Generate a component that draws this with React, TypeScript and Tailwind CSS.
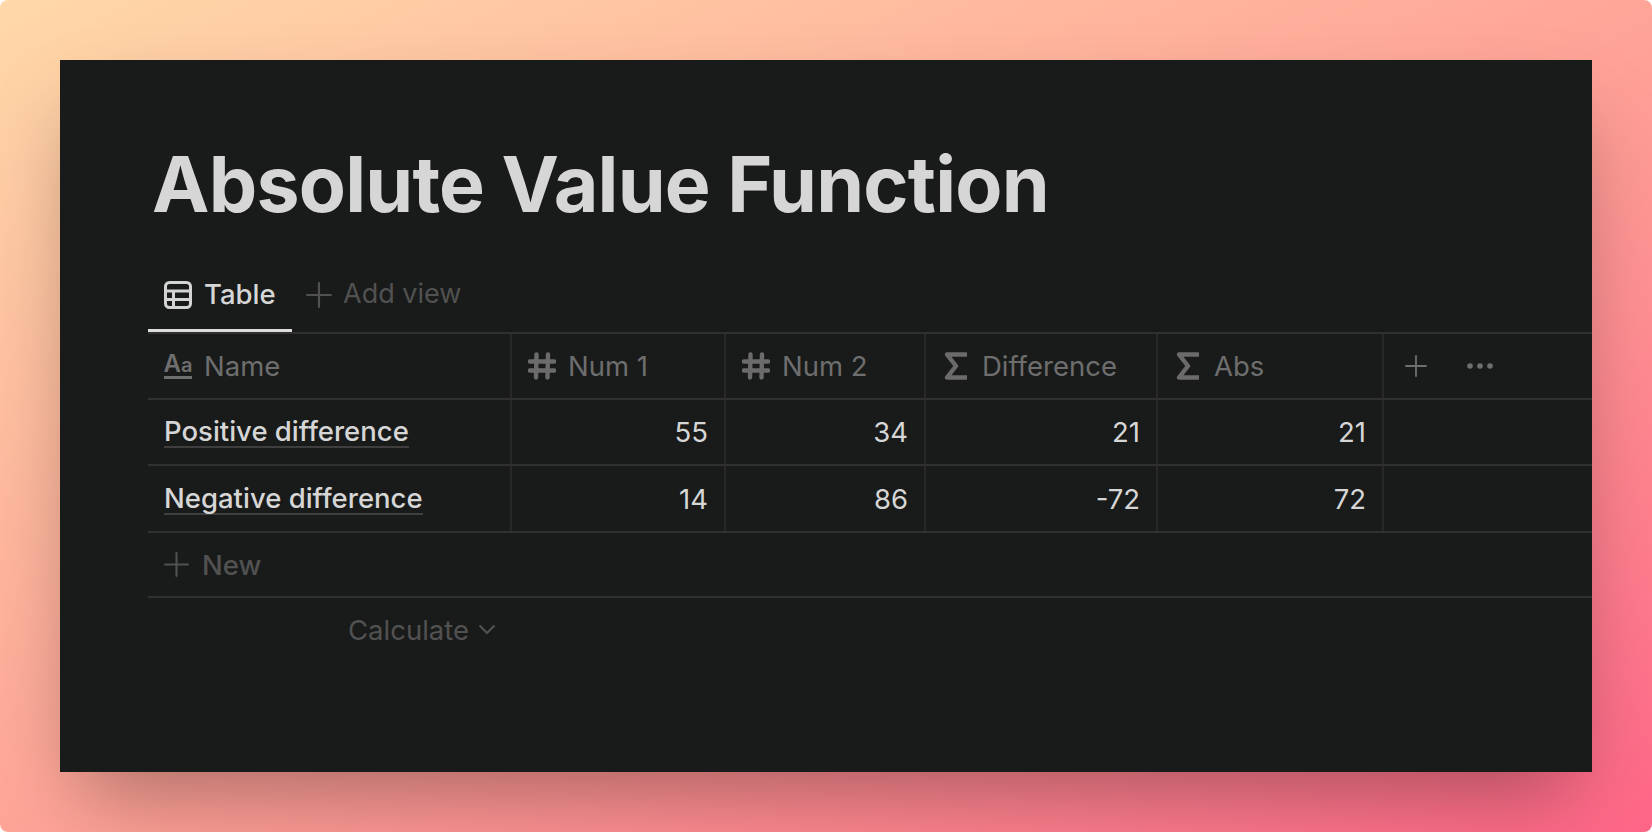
import type { ReactNode } from "react";

const cols = "grid grid-cols-[364px_214px_200px_232px_226px_1fr]";

function TableIcon() {
  return (
    <svg width="28" height="28" viewBox="0 0 28 28" fill="none" stroke="#d4d4d4" strokeWidth="3">
      <rect x="1.5" y="1.5" width="25" height="25" rx="4" />
      <path d="M1.5 10h25M1.5 18.5h25M9.5 10v16.5" />
    </svg>
  );
}

function HashIcon() {
  return (
    <svg width="28" height="28" viewBox="0 0 28 28" fill="none" stroke="#6b6b6b" strokeWidth="4.4" strokeLinecap="round">
      <path d="M8.5 2.5l-.5 23M20 2.5l-.5 23M2 9.5h24M2 18.5h24" />
    </svg>
  );
}

function SigmaIcon() {
  return (
    <svg width="24" height="28" viewBox="0 0 24 28" fill="none" stroke="#6b6b6b" strokeWidth="4.4" strokeLinejoin="round">
      <path d="M23 2.5H3L12 14 3 25.5h20" />
    </svg>
  );
}

function PlusIcon({ size, color }: { size: number; color: string }) {
  return (
    <svg width={size} height={size} viewBox="0 0 24 24" fill="none" stroke={color} strokeWidth="2" strokeLinecap="round">
      <path d="M12 1v22M1 12h22" />
    </svg>
  );
}

function HeaderCell({ icon, label }: { icon: ReactNode; label: string }) {
  return (
    <div className="flex items-center border-r-2 border-[#272827] pl-[16px] text-[#6e6e6e]">
      <span className="mr-[12px] flex w-[28px] shrink-0 justify-center">{icon}</span>
      <span className="pt-[2px]">{label}</span>
    </div>
  );
}

function DataRow({ name, values }: { name: string; values: number[] }) {
  return (
    <div className={`${cols} h-[66.5px] border-b-2 border-[#2f302f] text-[#d6d6d6]`}>
      <div className="flex items-center border-r-2 border-[#272827] pl-[16px]">
        <span className="border-b-2 border-[#3d3e3d] pt-[2px] font-medium leading-[29px]">{name}</span>
      </div>
      {values.map((v, i) => (
        <div key={i} className="flex items-center justify-end border-r-2 border-[#272827] pr-[16px] pt-[2px]">
          {v}
        </div>
      ))}
      <div />
    </div>
  );
}

export default function App() {
  return (
    <div className="h-screen bg-white font-['Inter',sans-serif]">
      <div className="h-full overflow-hidden rounded-lg bg-gradient-to-br from-[#ffd8a8] via-[#ffa598] to-[#ff6688] p-[60px]">
        <div className="h-[712px] overflow-hidden bg-[#191b1a] pl-[88px] text-[27.5px] shadow-[0_40px_80px_-20px_rgba(0,0,0,0.34)]">
          <h1 className="pl-[4px] pt-[77px] text-[77px] font-bold leading-[94px] tracking-[-0.8px] text-[#d6d6d6]">
            Absolute Value Function
          </h1>

          {/* Tabs */}
          <div className="mt-[31px] flex h-[70px] items-stretch">
            <div className="flex w-[144px] items-center gap-[12px] border-b-[3px] border-[#dcdcdc] pb-[2px] pl-[16px] font-medium text-[#d6d6d6]">
              <TableIcon />
              Table
            </div>
            <div className="ml-[14px] flex items-center gap-[11px] pb-[5px] text-[27px] text-[#515151]">
              <PlusIcon size={26} color="#515151" />
              Add view
            </div>
          </div>

          {/* Table */}
          <div className="border-t-2 border-[#2f302f]">
            <div className={`${cols} h-[65.5px] border-b-2 border-[#2f302f]`}>
              <div className="flex items-center border-r-2 border-[#272827] pl-[16px] text-[#6e6e6e]">
                <span className="mr-[12px] flex w-[28px] items-baseline justify-center border-b-[3px] border-[#6e6e6e] font-semibold leading-[22px]">
                  <span className="text-[24px]">A</span>
                  <span className="text-[20px]">a</span>
                </span>
                <span className="pt-[2px]">Name</span>
              </div>
              <HeaderCell icon={<HashIcon />} label="Num 1" />
              <HeaderCell icon={<HashIcon />} label="Num 2" />
              <HeaderCell icon={<SigmaIcon />} label="Difference" />
              <HeaderCell icon={<SigmaIcon />} label="Abs" />
              <div className="flex items-center pl-[21px]">
                <PlusIcon size={22} color="#6e6e6e" />
                <svg className="ml-[40px]" width="26" height="6" viewBox="0 0 26 6" fill="#6e6e6e">
                  <circle cx="3" cy="3" r="2.8" />
                  <circle cx="13" cy="3" r="2.8" />
                  <circle cx="23" cy="3" r="2.8" />
                </svg>
              </div>
            </div>
            <DataRow name="Positive difference" values={[55, 34, 21, 21]} />
            <DataRow name="Negative difference" values={[14, 86, -72, 72]} />
            <div className="flex h-[65px] items-center gap-[13px] border-b-2 border-[#2f302f] pl-[16px] text-[#515151]">
              <PlusIcon size={25} color="#515151" />
              <span className="pt-[4px] font-medium">New</span>
            </div>
            <div className="flex h-[64px] items-center pl-[200px] text-[#515151]">
              <span className="pt-[2px]">Calculate</span>
              <svg className="ml-[9px]" width="18" height="11" viewBox="0 0 18 11" fill="none" stroke="#515151" strokeWidth="2.2">
                <path d="M1.5 1.5L9 9l7.5-7.5" />
              </svg>
            </div>
          </div>
        </div>
      </div>
    </div>
  );
}
